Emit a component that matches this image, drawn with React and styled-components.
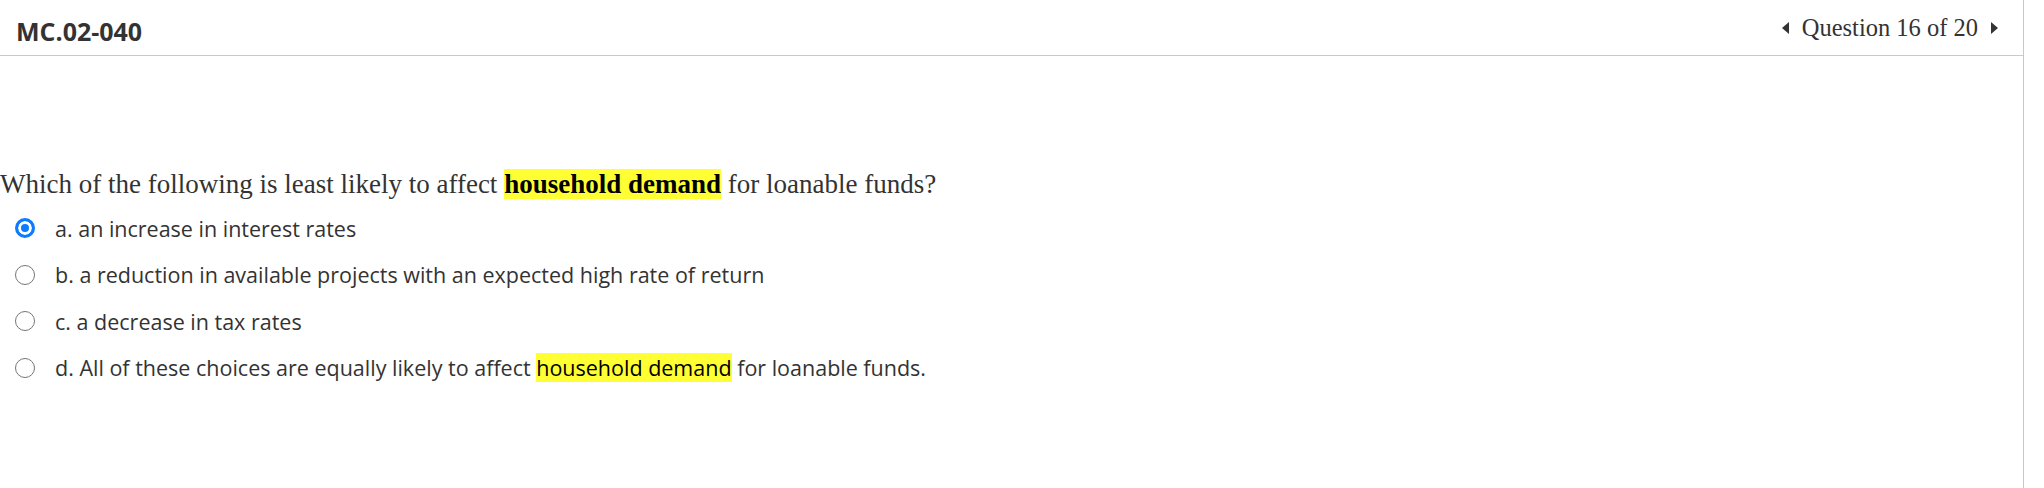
import React from "react";
import styled, { createGlobalStyle } from "styled-components";

const Global = createGlobalStyle`
  html, body { margin: 0; padding: 0; background: #fff; }
  body { width: 2044px; height: 488px; overflow: hidden; }
`;

const Page = styled.div`
  display: flex;
  height: 488px;
`;

const Panel = styled.main`
  width: 2023px;
  border-right: 1px solid #c9c9c9;
  display: flex;
  flex-direction: column;
`;

const Header = styled.header`
  height: 55px;
  border-bottom: 1px solid #c9c9c9;
  display: flex;
  align-items: center;
  justify-content: space-between;
  padding: 0 25px 0 16px;
`;

const Title = styled.h1`
  margin: 0;
  font-family: "Open Sans", sans-serif;
  font-weight: 700;
  font-size: 25px;
  color: #333;
  padding-top: 6px;
`;

const Nav = styled.div`
  display: flex;
  align-items: center;
  gap: 13px;
  font-family: "Liberation Serif", serif;
  font-size: 24.5px;
  color: #333;
`;

const Arrow = styled.span`
  width: 0;
  height: 0;
  border-top: 6px solid transparent;
  border-bottom: 6px solid transparent;
  ${(p) => (p.$dir === "left" ? "border-right: 7px solid #333;" : "border-left: 7px solid #333;")}
`;

const Body = styled.section`
  padding-top: 111px;
`;

const Question = styled.p`
  margin: 0 0 4px 0;
  font-family: "Liberation Serif", serif;
  font-size: 27px;
  line-height: 34px;
  color: #333;
`;

const Mark = styled.mark`
  background: #ffff33;
  color: #000;
  font-weight: ${(p) => (p.$bold ? 700 : 400)};
`;

const Options = styled.ul`
  list-style: none;
  margin: 0;
  padding: 0;
  display: flex;
  flex-direction: column;
`;

const Option = styled.li`
  display: flex;
  align-items: center;
  height: 46.5px;
  padding-left: 15px;
  gap: 20px;
  font-family: "Open Sans", sans-serif;
  font-size: 21.5px;
  color: #333;
`;

const Radio = styled.span`
  box-sizing: border-box;
  width: 20px;
  height: 20px;
  border-radius: 50%;
  flex: none;
  border: ${(p) => (p.$checked ? "3px solid #0b7bff" : "1.5px solid #767676")};
  background: ${(p) => (p.$checked ? "#0b7bff" : "#fff")};
  box-shadow: ${(p) => (p.$checked ? "inset 0 0 0 3px #fff" : "none")};
`;

const options = [
  { key: "a", checked: true, text: "a. an increase in interest rates" },
  { key: "b", text: "b. a reduction in available projects with an expected high rate of return" },
  { key: "c", text: "c. a decrease in tax rates" },
  {
    key: "d",
    text: (
      <>
        d. All of these choices are equally likely to affect <Mark>household demand</Mark> for loanable funds.
      </>
    ),
  },
];

export default function App() {
  return (
    <>
      <Global />
      <Page>
        <Panel>
          <Header>
            <Title>MC.02-040</Title>
            <Nav>
              <Arrow $dir="left" />
              <span>Question 16 of 20</span>
              <Arrow $dir="right" />
            </Nav>
          </Header>
          <Body>
            <Question>
              Which of the following is least likely to affect <Mark $bold>household demand</Mark> for loanable funds?
            </Question>
            <Options>
              {options.map((o) => (
                <Option key={o.key}>
                  <Radio $checked={o.checked} />
                  <span>{o.text}</span>
                </Option>
              ))}
            </Options>
          </Body>
        </Panel>
      </Page>
    </>
  );
}
